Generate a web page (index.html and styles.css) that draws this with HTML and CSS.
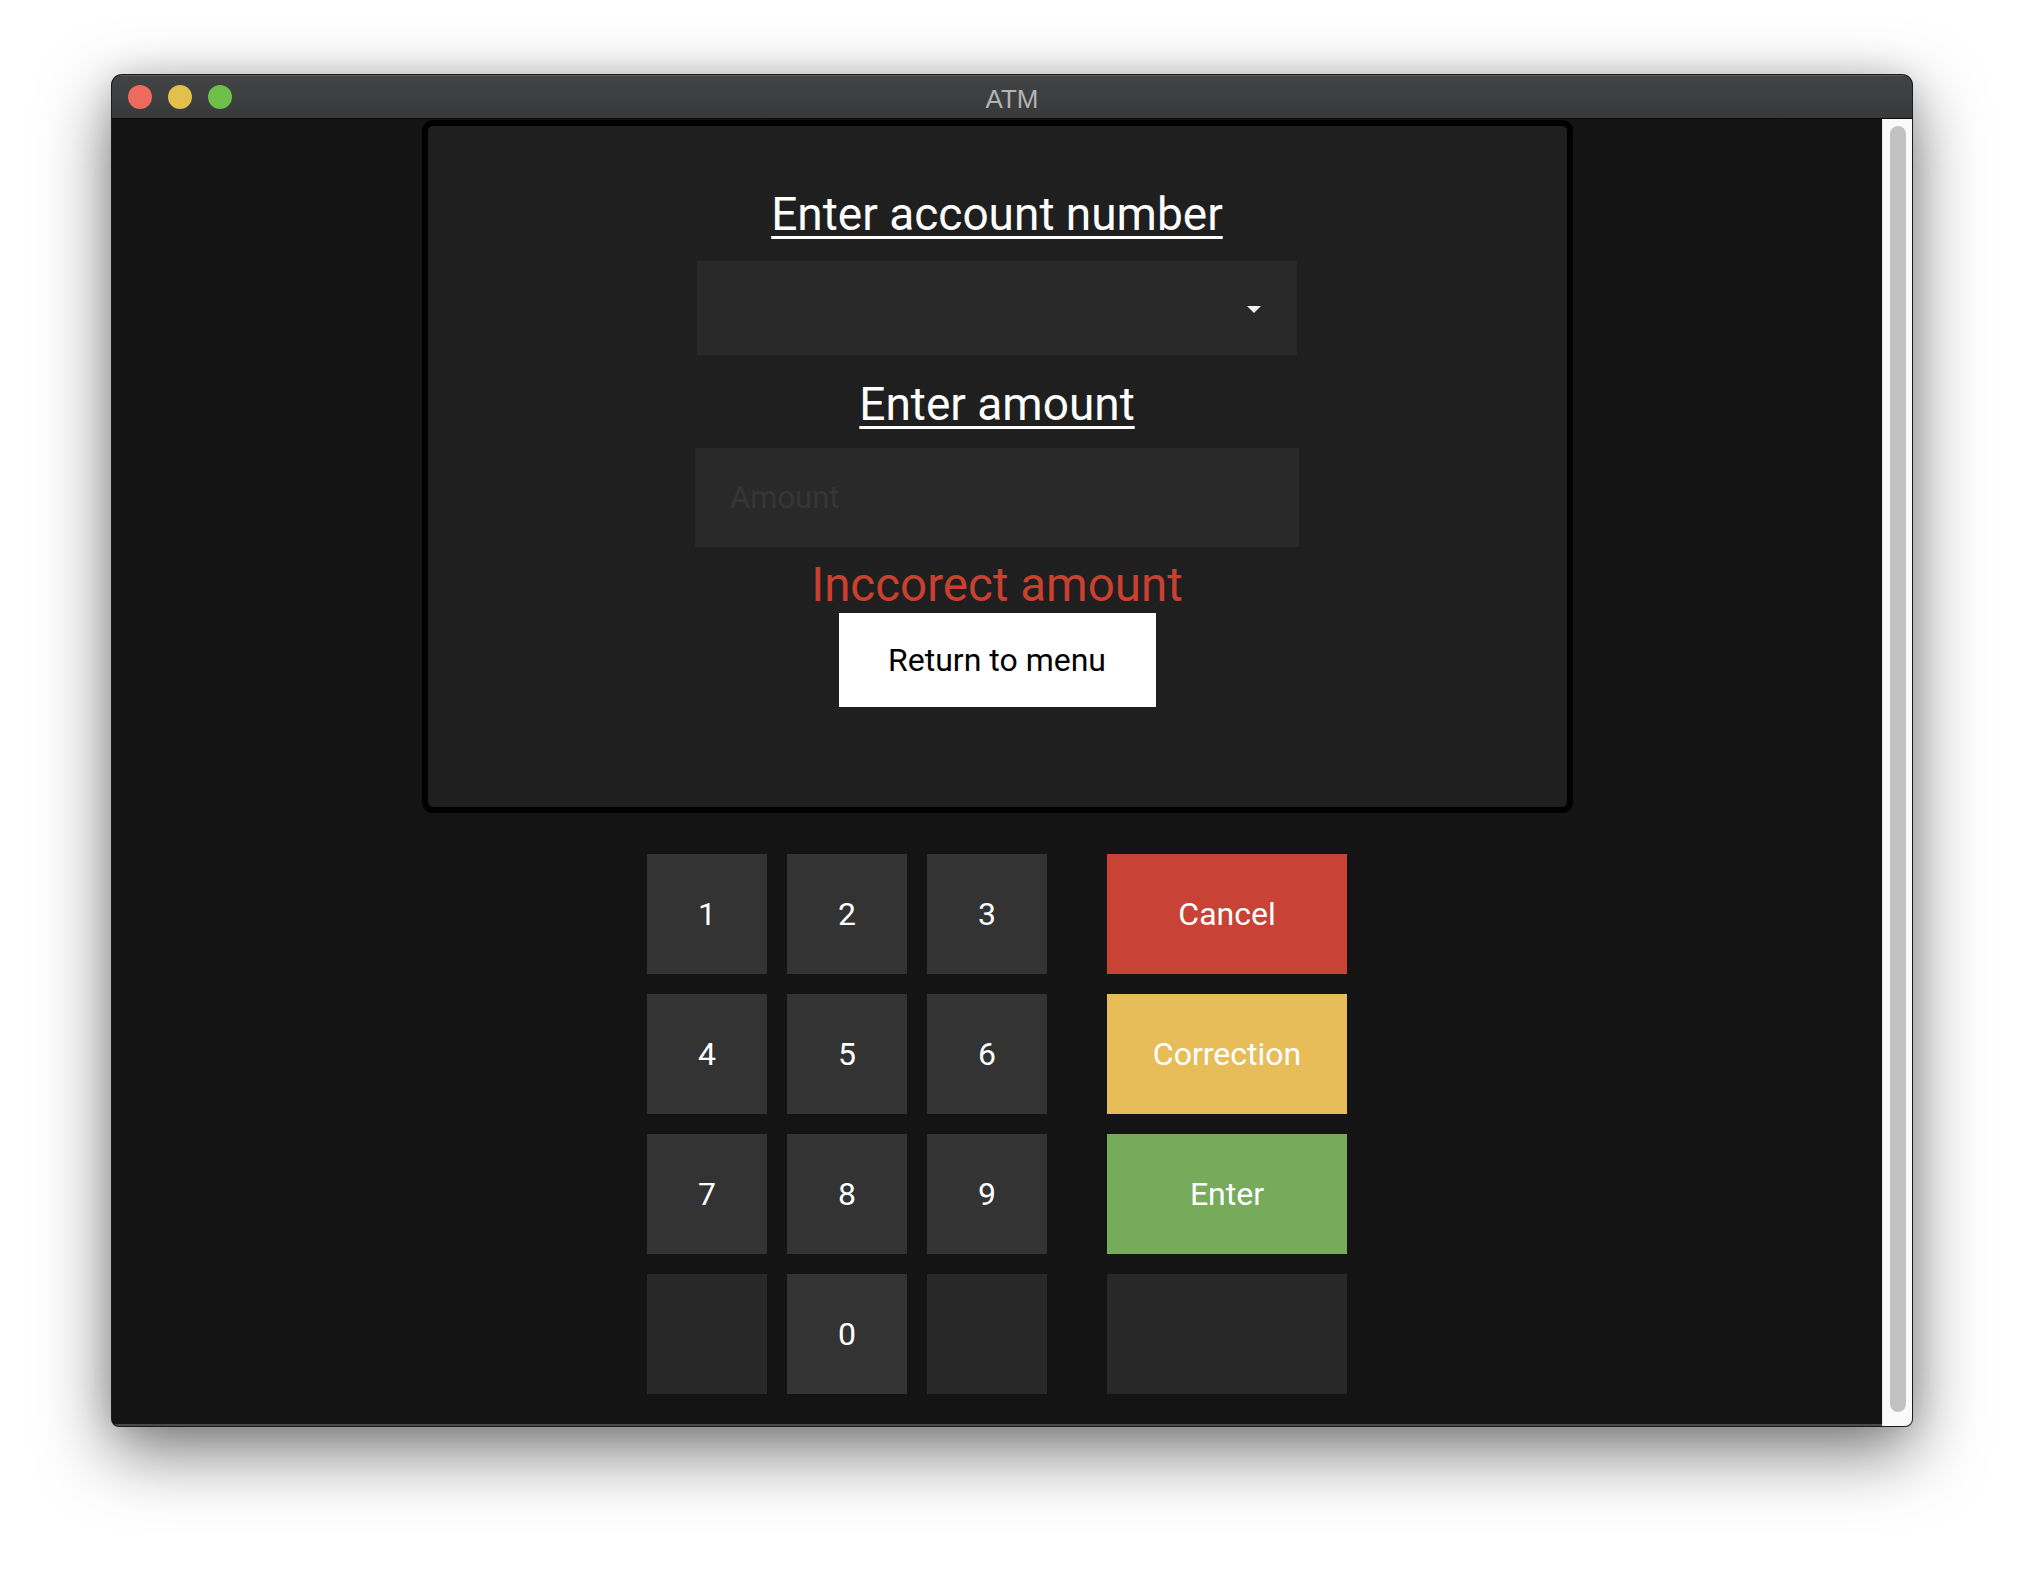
FILE: index.html
```html
<!DOCTYPE html>
<html lang="en">
<head>
<meta charset="utf-8">
<title>ATM</title>
<link rel="stylesheet" href="styles.css">
</head>
<body>
<div class="window">
  <div class="titlebar">
    <div class="lights">
      <span class="light red"></span>
      <span class="light yellow"></span>
      <span class="light green"></span>
    </div>
    <div class="title">ATM</div>
    <div class="spacer"></div>
  </div>
  <div class="body">
    <div class="content">
      <div class="panel">
        <h1 class="heading">Enter account number</h1>
        <div class="select">
          <svg class="caret" width="14" height="7" viewBox="0 0 14 7"><path d="M0 0 H14 L7 7 Z" fill="#f2f2f2"/></svg>
        </div>
        <h2 class="heading second">Enter amount</h2>
        <input class="amount" type="text" placeholder="Amount">
        <div class="error">Inccorect amount</div>
        <button class="return">Return to menu</button>
      </div>
      <div class="keypad">
        <div class="digits">
          <div class="key">1</div>
          <div class="key">2</div>
          <div class="key">3</div>
          <div class="key">4</div>
          <div class="key">5</div>
          <div class="key">6</div>
          <div class="key">7</div>
          <div class="key">8</div>
          <div class="key">9</div>
          <div class="key blank"></div>
          <div class="key">0</div>
          <div class="key blank"></div>
        </div>
        <div class="actions">
          <div class="action cancel">Cancel</div>
          <div class="action correction">Correction</div>
          <div class="action enter">Enter</div>
          <div class="action blank"></div>
        </div>
      </div>
    </div>
    <div class="scrollbar"><div class="thumb"></div></div>
  </div>
</div>
</body>
</html>
```
FILE: styles.css
```css
html, body {
  margin: 0;
  padding: 0;
  background: #ffffff;
}
body {
  width: 2024px;
  height: 1574px;
  overflow: hidden;
  font-family: Roboto, "Liberation Sans", sans-serif;
}
.window {
  margin-left: 112px;
  margin-top: 75px;
  width: 1800px;
  height: 1351px;
  border-radius: 10px 10px 7px 7px;
  overflow: hidden;
  box-shadow: 0 0 0 1px #1a1a1a, 0 24px 70px rgba(0, 0, 0, 0.55), 0 0 30px rgba(0,0,0,0.12);
  display: flex;
  flex-direction: column;
  background: #141414;
}
.titlebar {
  flex: none;
  background: linear-gradient(#424345, #38393b);
  border-top: 1px solid #5b5c5e;
  border-bottom: 1px solid #0d0d0d;
  display: grid;
  grid-template-columns: 1fr auto 1fr;
  align-items: center;
  box-sizing: border-box;
  height: 44px;
}
.lights {
  display: flex;
  gap: 16px;
  padding-left: 16px;
}
.light {
  width: 24px;
  height: 24px;
  border-radius: 50%;
}
.red { background: #ee6a5f; }
.yellow { background: #e2c04d; }
.green { background: #6dbf4a; }
.title {
  font-family: "Liberation Sans", Arial, sans-serif;
  font-size: 26px;
  color: #b3b3b4;
  padding-top: 5px;
}
.body {
  flex: 1;
  display: flex;
  min-height: 0;
}
.content {
  flex: 1;
  background: #141414;
  display: flex;
  flex-direction: column;
  align-items: center;
  border-bottom: 2px solid #4a4a4a;
}
.scrollbar {
  width: 30px;
  flex: none;
  background: #fafafa;
  border-left: 1px solid #e6e6e6;
  box-sizing: border-box;
  padding: 7px 6px 14px 7px;
}
.thumb {
  height: 100%;
  background: #c2c2c2;
  border-radius: 8px;
}
.panel {
  width: 1151px;
  height: 693px;
  box-sizing: border-box;
  margin-top: 1px;
  border: 6px solid #000;
  border-radius: 11px;
  background: #1f1f1f;
  display: flex;
  flex-direction: column;
  align-items: center;
  padding-top: 60px;
}
.heading {
  margin: 0;
  font-size: 46px;
  line-height: 56px;
  font-weight: 400;
  color: #ffffff;
  text-decoration: underline;
  text-decoration-thickness: 3px;
  text-underline-offset: 6px;
}
.select {
  margin-top: 19px;
  width: 600px;
  height: 94px;
  background: #292929;
  display: flex;
  align-items: center;
  justify-content: flex-end;
  padding-right: 36px;
  box-sizing: border-box;
}
.caret {
  display: block;
  margin-top: 2px;
}
.heading.second {
  margin-top: 21px;
}
.amount {
  margin-top: 16px;
  width: 604px;
  height: 99px;
  box-sizing: border-box;
  background: #292929;
  border: none;
  outline: none;
  padding: 0 35px;
  font-family: Roboto, "Liberation Sans", sans-serif;
  font-size: 31px;
  color: #ffffff;
}
.amount::placeholder {
  color: #363636;
}
.error {
  margin-top: 11px;
  font-size: 47.5px;
  line-height: 55px;
  color: #c9402f;
}
.return {
  width: 317px;
  height: 94px;
  background: #ffffff;
  border: none;
  font-family: Roboto, "Liberation Sans", sans-serif;
  font-size: 32px;
  color: #000000;
  padding: 0;
}
.keypad {
  margin-top: 41px;
  display: flex;
  gap: 60px;
}
.digits {
  display: grid;
  grid-template-columns: repeat(3, 120px);
  grid-auto-rows: 120px;
  gap: 20px;
}
.actions {
  display: grid;
  grid-template-columns: 240px;
  grid-auto-rows: 120px;
  gap: 20px;
}
.key, .action {
  display: flex;
  align-items: center;
  justify-content: center;
  font-size: 32px;
  color: #ffffff;
  background: #333333;
}
.key.blank, .action.blank {
  background: #282828;
}
.cancel { background: #c94236; }
.correction { background: #e7bd5a; }
.enter { background: #76ab5c; }
```
